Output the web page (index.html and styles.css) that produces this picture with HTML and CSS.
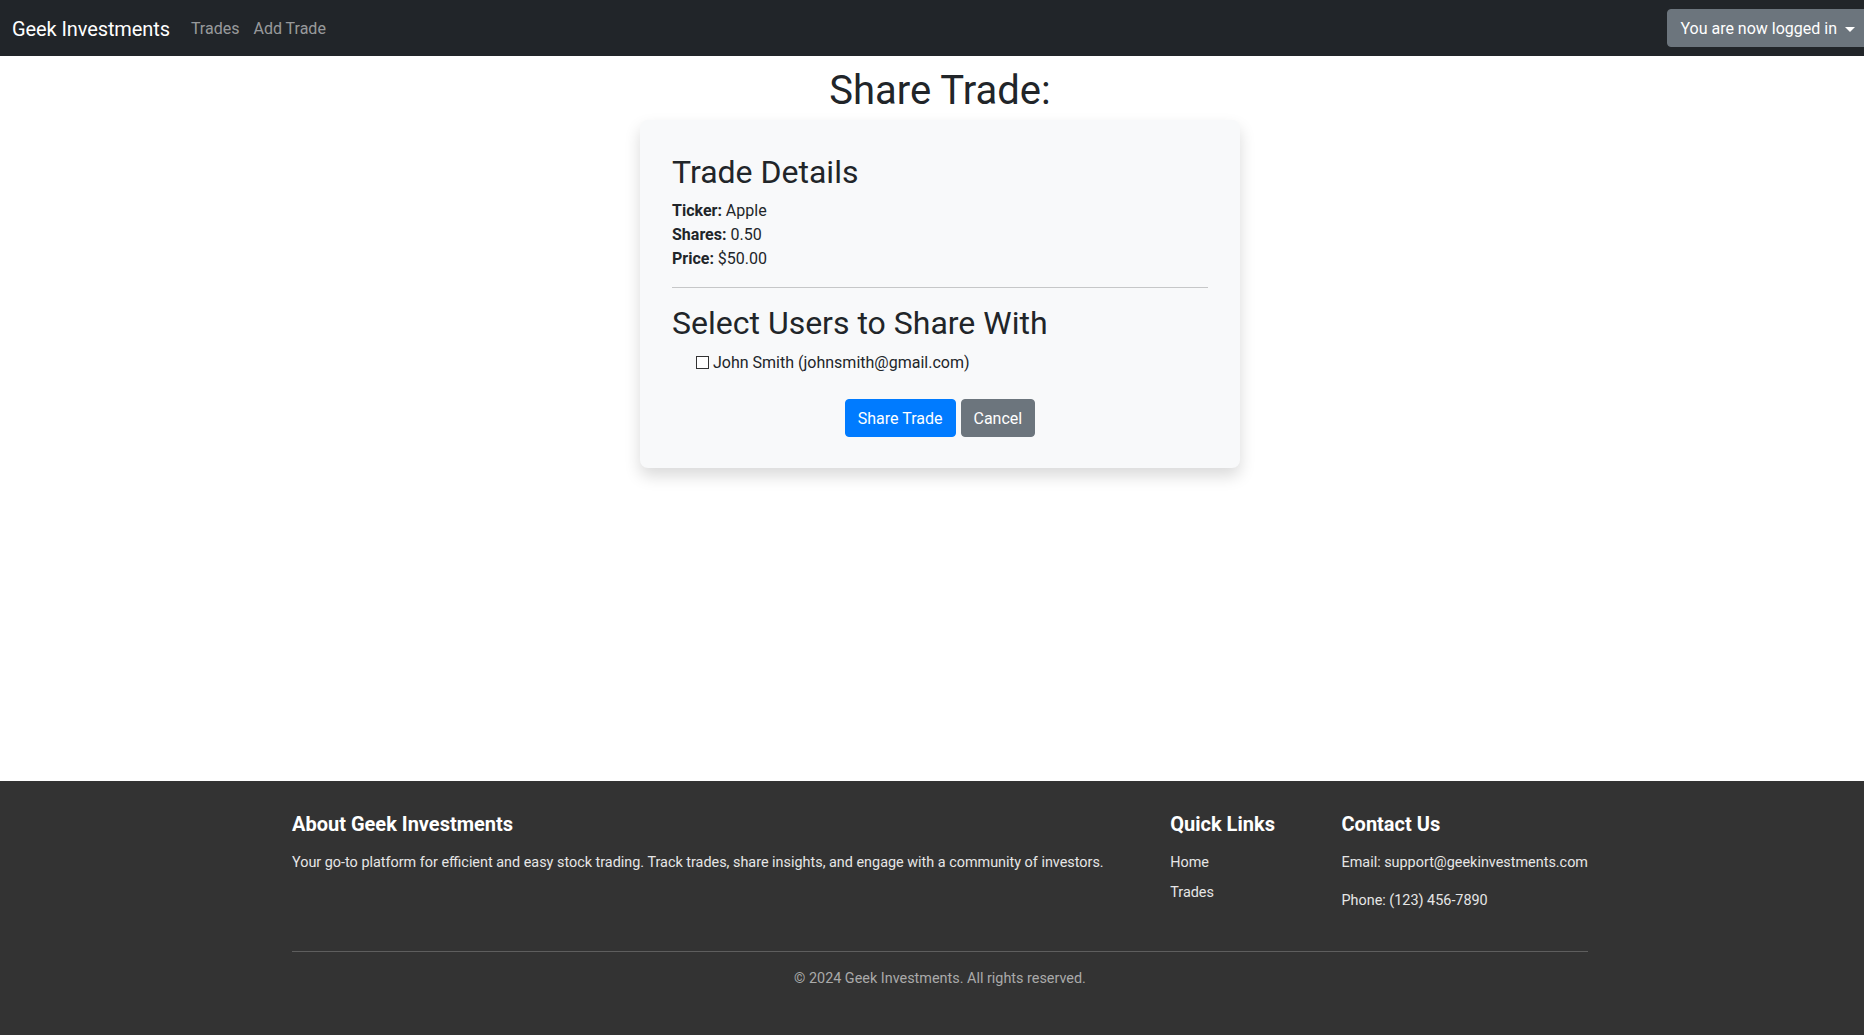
FILE: index.html
```html
<!DOCTYPE html>
<html lang="en">
<head>
<meta charset="utf-8">
<title>Share Trade - Geek Investments</title>
<link rel="stylesheet" href="styles.css">
</head>
<body>
<div class="page">
  <nav class="navbar">
    <a class="brand" href="#">Geek Investments</a>
    <ul class="nav">
      <li><a class="nav-link" href="#">Trades</a></li>
      <li><a class="nav-link" href="#">Add Trade</a></li>
    </ul>
    <button class="user-btn" type="button">You are now logged in<span class="caret"></span></button>
  </nav>

  <main class="main">
    <h1 class="title">Share Trade:</h1>
    <div class="card">
      <h2 class="card-heading">Trade Details</h2>
      <p class="details">
        <strong>Ticker:</strong> Apple<br>
        <strong>Shares:</strong> 0.50<br>
        <strong>Price:</strong> $50.00
      </p>
      <hr class="divider">
      <h2 class="card-heading">Select Users to Share With</h2>
      <label class="user-check"><input type="checkbox" class="check">John Smith (johnsmith@gmail.com)</label>
      <div class="actions">
        <button class="btn btn-primary" type="button">Share Trade</button>
        <button class="btn btn-secondary" type="button">Cancel</button>
      </div>
    </div>
  </main>

  <footer class="footer">
    <div class="footer-inner">
      <div class="footer-row">
        <div class="footer-col">
          <h5 class="footer-title">About Geek Investments</h5>
          <p class="footer-text">Your go-to platform for efficient and easy stock trading. Track trades, share insights, and engage with a community of investors.</p>
        </div>
        <div class="footer-col">
          <h5 class="footer-title">Quick Links</h5>
          <ul class="footer-links">
            <li><a href="#">Home</a></li>
            <li><a href="#">Trades</a></li>
          </ul>
        </div>
        <div class="footer-col">
          <h5 class="footer-title">Contact Us</h5>
          <p class="footer-text">Email: support@geekinvestments.com</p>
          <p class="footer-text">Phone: (123) 456-7890</p>
        </div>
      </div>
      <hr class="footer-divider">
      <p class="copyright">© 2024 Geek Investments. All rights reserved.</p>
    </div>
  </footer>
</div>
</body>
</html>
```

FILE: styles.css
```css
html {
  overflow: hidden;
}
body {
  margin: 0;
  font-family: Roboto, "Liberation Sans", sans-serif;
  font-size: 16px;
  line-height: 1.5;
  color: #212529;
  background: #fff;
}
.page {
  width: 1880px;
  min-height: 100vh;
  display: flex;
  flex-direction: column;
}

/* navbar */
.navbar {
  display: flex;
  align-items: center;
  height: 56px;
  box-sizing: border-box;
  padding: 8px 12px;
  background: #212529;
}
.brand {
  font-size: 20px;
  line-height: 30px;
  padding: 6px 0 4px;
  margin-right: 14px;
  color: #fff;
  text-decoration: none;
  letter-spacing: -0.1px;
}
.nav {
  display: flex;
  list-style: none;
  margin: 0;
  padding: 0;
}
.nav-link {
  display: block;
  padding: 9px 7px 7px;
  color: rgba(255, 255, 255, 0.55);
  text-decoration: none;
}
.user-btn {
  margin-left: auto;
  display: flex;
  align-items: center;
  font: inherit;
  color: #fff;
  background: #6c757d;
  border: 1px solid #6c757d;
  border-radius: 4px;
  padding: 7px 12px 5px;
  line-height: 24px;
}
.caret {
  display: inline-block;
  margin-left: 8px;
  border-top: 5px solid #fff;
  border-left: 5px solid transparent;
  border-right: 5px solid transparent;
}

/* main */
.main {
  flex: 1;
  padding-top: 11px;
}
.title {
  margin: 0 0 5px;
  font-size: 40px;
  line-height: 1.2;
  font-weight: 400;
  text-align: center;
}
.card {
  width: 600px;
  box-sizing: border-box;
  margin: 0 auto;
  padding: 33px 32px 31px;
  background: #f8f9fa;
  border-radius: 8px;
  box-shadow: 0 8px 16px rgba(0, 0, 0, 0.15);
}
.card-heading {
  margin: 0 0 8px;
  font-size: 32px;
  line-height: 1.2;
  font-weight: 400;
}
.details {
  margin: 0 0 16px;
}
.details strong {
  font-weight: 700;
}
.divider {
  margin: 16px 0;
  border: 0;
  border-top: 1px solid #c6c7c8;
}
.user-check {
  display: flex;
  align-items: center;
  padding-left: 24px;
  margin-bottom: 24px;
  line-height: 24px;
}
.check {
  appearance: none;
  -webkit-appearance: none;
  width: 13px;
  height: 13px;
  margin: 0 4px 0 0;
  border: 1px solid #333;
  background: #fff;
  box-sizing: border-box;
}
.actions {
  display: flex;
  justify-content: center;
  gap: 5px;
}
.btn {
  font: inherit;
  line-height: 24px;
  padding: 7px 12px 5px;
  border-radius: 4px;
  border: 1px solid transparent;
  color: #fff;
}
.btn-primary {
  background: #007bff;
  border-color: #007bff;
}
.btn-secondary {
  background: #6c757d;
  border-color: #6c757d;
}

/* footer */
.footer {
  background: #333;
  color: #e6e6e6;
  padding: 31px 0 29px;
}
.footer-inner {
  width: 1296px;
  margin: 0 auto;
}
.footer-row {
  display: flex;
  justify-content: space-between;
}
.footer-title {
  margin: 0 0 16px;
  font-size: 20px;
  line-height: 1.2;
  font-weight: 700;
  color: #fff;
}
.footer-text {
  margin: 0 0 16px;
  font-size: 14.4px;
  line-height: 1.5;
}
.footer-links {
  list-style: none;
  margin: 0;
  padding: 0;
  font-size: 14.4px;
  line-height: 1.5;
}
.footer-links li {
  margin-bottom: 8px;
}
.footer-links a {
  color: #e6e6e6;
  text-decoration: none;
}
.footer-divider {
  margin: 24px 0 16px;
  border: 0;
  border-top: 1px solid #5e5e5e;
}
.copyright {
  margin: 0 0 16px;
  text-align: center;
  font-size: 14.4px;
  line-height: 1.5;
  color: #aaa;
}
```
